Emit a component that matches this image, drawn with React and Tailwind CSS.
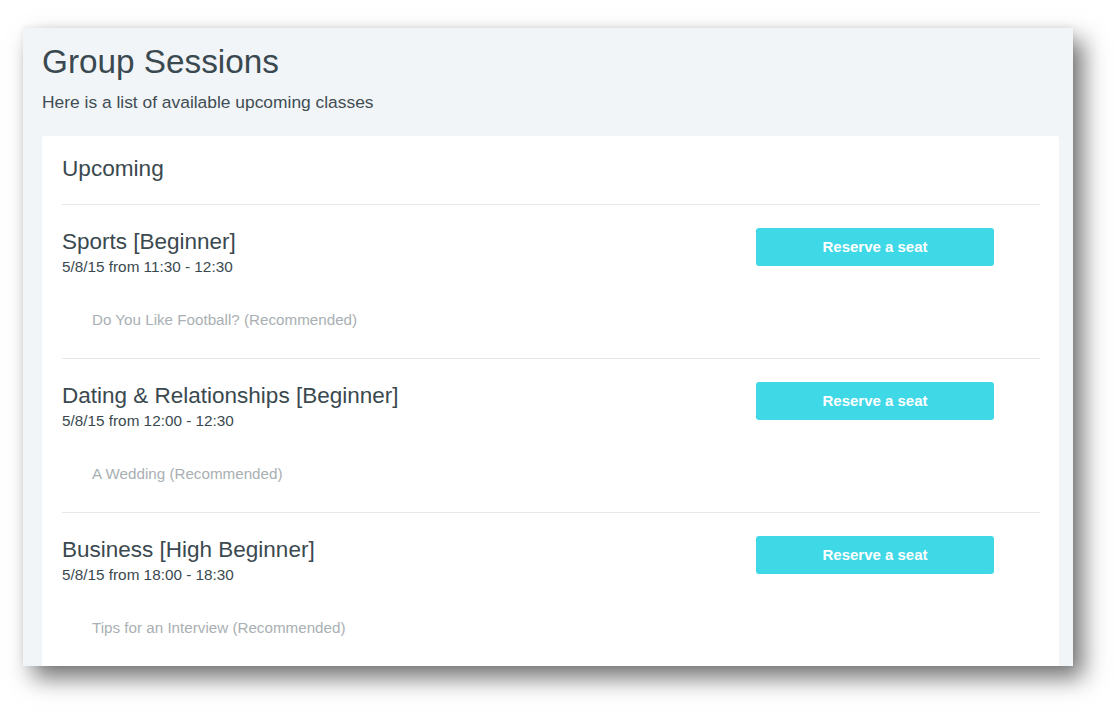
import React from "react";

const sessions = [
  { title: "Sports [Beginner]", date: "5/8/15 from 11:30 - 12:30", rec: "Do You Like Football? (Recommended)" },
  { title: "Dating & Relationships [Beginner]", date: "5/8/15 from 12:00 - 12:30", rec: "A Wedding (Recommended)" },
  { title: "Business [High Beginner]", date: "5/8/15 from 18:00 - 18:30", rec: "Tips for an Interview (Recommended)" },
];

export default function App() {
  return (
    <div className="w-[1119px] h-[723px] bg-white overflow-hidden pt-[28px] pl-[23px]" style={{ fontFamily: '"Liberation Sans", Arial, Helvetica, sans-serif' }}>
      <div className="w-[1050px] h-[638px] bg-[#f2f5f8] pl-[19px] pr-[14px] pt-[14px] overflow-hidden shadow-[0_-1px_6px_rgba(0,0,0,0.06),10px_12px_22px_rgba(0,0,0,0.55)]">
        <h1 className="text-[33.3px] leading-[40px] text-[#3a494f]">Group Sessions</h1>
        <p className="mt-[8px] text-[17.4px] leading-[24px] text-[#3f4d53]">Here is a list of available upcoming classes</p>
        <div className="mt-[22px] bg-white rounded-t-[3px] pl-[20px] pr-[19px] h-[600px]">
          <div className="pt-[18px] pb-[20px] border-b border-[#e6e8ea]">
            <h2 className="text-[22.6px] leading-[30px] text-[#3a494f]">Upcoming</h2>
          </div>
          {sessions.map((s, i) => (
            <div key={i} className="flex justify-between border-b border-[#e6e8ea] pt-[23px] pb-[28px]">
              <div>
                <div className="text-[22.5px] leading-[28px] text-[#3a494f]">{s.title}</div>
                <div className="mt-[1px] text-[15.3px] leading-[20px] text-[#3a494f]">{s.date}</div>
                <div className="mt-[33px] pl-[30px] text-[15.2px] leading-[20px] text-[#a9afb3]">{s.rec}</div>
              </div>
              <button className="mr-[46px] w-[238px] h-[38px] rounded-[3px] bg-[#3ed8e7] text-white font-bold text-[15px]">Reserve a seat</button>
            </div>
          ))}
        </div>
      </div>
    </div>
  );
}
